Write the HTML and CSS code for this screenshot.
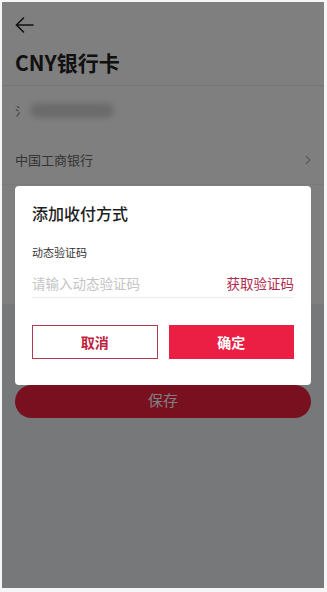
FILE: index.html
```html
<!DOCTYPE html>
<html lang="zh-CN">
<head>
<meta charset="utf-8">
<title>CNY银行卡</title>
<link rel="stylesheet" href="styles.css">
</head>
<body>
<div class="frame">
  <div class="page">
    <header class="header">
      <button class="back" aria-label="返回">
        <svg width="19" height="16" viewBox="0 0 19 16" fill="none" stroke="#222" stroke-width="1.6" stroke-linecap="round" stroke-linejoin="round">
          <path d="M18 8H1.5"/>
          <path d="M8.5 1L1.5 8l7 7"/>
        </svg>
      </button>
      <h1 class="title">CNY银行卡</h1>
    </header>
    <div class="list">
      <div class="row">
        <span class="masked-first">氵</span>
        <span class="masked-blur"></span>
      </div>
      <div class="row">
        <span class="row-text">中国工商银行</span>
        <svg class="chev" width="6" height="10" viewBox="0 0 6 10" fill="none" stroke="#b5b5b5" stroke-width="1.2"><path d="M1 1l4 4-4 4"/></svg>
      </div>
      <div class="filler"></div>
    </div>
    <div class="bottom">
      <button class="save">保存</button>
    </div>
  </div>
  <div class="overlay">
    <div class="modal">
      <h2 class="modal-title">添加收付方式</h2>
      <div class="label">动态验证码</div>
      <div class="input-row">
        <span class="placeholder">请输入动态验证码</span>
        <span class="get-code">获取验证码</span>
      </div>
      <div class="actions">
        <button class="btn btn-cancel">取消</button>
        <button class="btn btn-ok">确定</button>
      </div>
    </div>
  </div>
</div>
</body>
</html>
```

FILE: styles.css
```css
* { box-sizing: border-box; }
html, body { margin: 0; padding: 0; }
body {
  background: #f6f6f6;
  font-family: "Noto Sans CJK SC", "Noto Sans", sans-serif;
  width: 327px;
  height: 592px;
  padding: 2px 3px 4px 2px;
}
.frame {
  position: relative;
  width: 322px;
  height: 586px;
  overflow: hidden;
}
.page {
  display: flex;
  flex-direction: column;
  height: 100%;
  background: #edf0f5;
}
.header {
  background: #fff;
  height: 84px;
  padding: 15px 13px 0;
  border-bottom: 1px solid #eceaea;
}
.back {
  display: block;
  border: 0;
  background: none;
  padding: 0;
  width: 19px;
  height: 16px;
}
.back svg { display: block; }
.title {
  margin: 14px 0 0;
  font-size: 21px;
  line-height: 30px;
  font-weight: 700;
  color: #222;
}
.list {
  background: #fff;
  display: flex;
  flex-direction: column;
}
.row {
  height: 49px;
  padding: 0 13px;
  display: flex;
  align-items: center;
}
.masked-first {
  font-size: 12px;
  color: #777;
}
.masked-blur {
  margin-left: 3px;
  width: 84px;
  height: 15px;
  border-radius: 8px;
  background: #d6d6d6;
  filter: blur(3px);
}
.row-text {
  flex: 1;
  font-size: 13px;
  color: #6a6a6a;
}
.chev { display: block; }
.filler { height: 120px; border-top: 1px solid #f4f4f4; }
.bottom {
  flex: 1;
  padding: 81px 13px 0;
}
.save {
  display: block;
  width: 296px;
  height: 33px;
  border: 0;
  border-radius: 17px;
  background: #f22040;
  color: #fff;
  font-family: inherit;
  font-size: 15px;
  line-height: 29px;
  padding: 0 0 4px;
}
.overlay {
  position: absolute;
  inset: 0;
  background: rgba(0, 0, 0, 0.5);
  padding: 184px 13px 0;
}
.modal {
  background: #fff;
  border-radius: 4px;
  height: 199px;
  padding: 17px 17px 26px;
}
.modal-title {
  margin: 0;
  font-size: 16px;
  line-height: 20px;
  font-weight: 500;
  color: #1e1e1e;
}
.label {
  margin-top: 21px;
  font-size: 11px;
  line-height: 16px;
  color: #333;
}
.input-row {
  margin-top: 10px;
  height: 28px;
  display: flex;
  justify-content: space-between;
  align-items: center;
  border-bottom: 1px solid #ececec;
  padding-bottom: 1px;
}
.placeholder {
  font-size: 13.5px;
  color: #c4c4c4;
}
.get-code {
  font-size: 13.5px;
  color: #b02b4d;
}
.actions {
  margin-top: 27px;
  display: flex;
  gap: 11px;
}
.btn {
  flex: 1;
  height: 34px;
  font-family: inherit;
  font-size: 14px;
  font-weight: 700;
  border-radius: 0;
}
.btn-cancel {
  background: #fff;
  border: 1px solid #b03a52;
  color: #c21f3e;
}
.btn-ok {
  background: #ea1f43;
  border: 1px solid #ea1f43;
  color: #fff;
}
```
